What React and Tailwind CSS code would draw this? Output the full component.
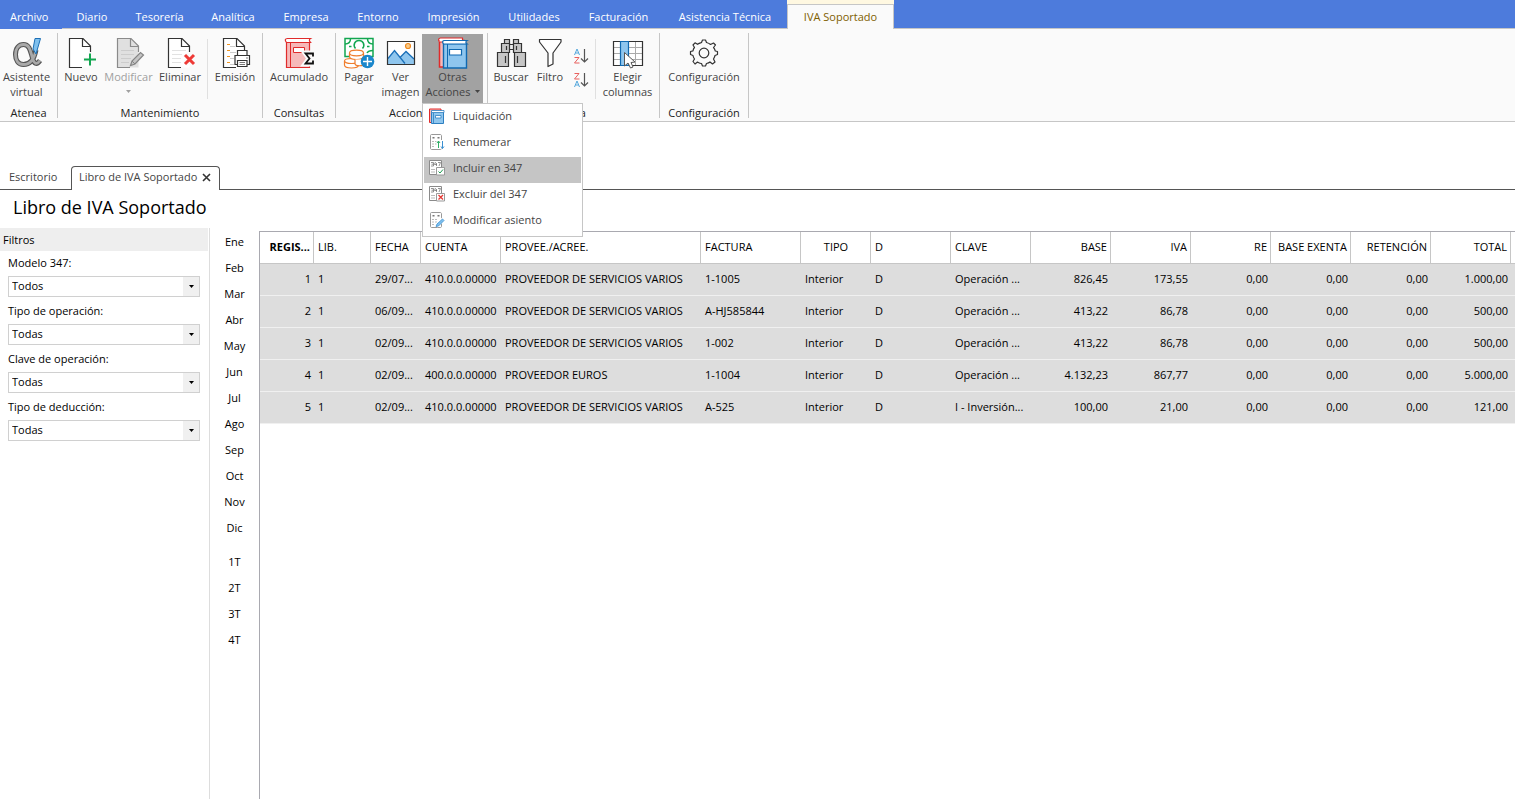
import React from 'react';

const menuTabs = [
  { label: 'Diario', width: 'w-[60px]' },
  { label: 'Tesorería', width: 'w-[75px]' },
  { label: 'Analítica', width: 'w-[72px]' },
  { label: 'Empresa', width: 'w-[74px]' },
  { label: 'Entorno', width: 'w-[70px]' },
  { label: 'Impresión', width: 'w-[81px]' },
  { label: 'Utilidades', width: 'w-[80px]' },
  { label: 'Facturación', width: 'w-[89px]' },
  { label: 'Asistencia Técnica', width: 'w-[124px]' },
];

const filters = [
  { id: 'modelo', label: 'Modelo 347:', value: 'Todos' },
  { id: 'tipo-operacion', label: 'Tipo de operación:', value: 'Todas' },
  { id: 'clave-operacion', label: 'Clave de operación:', value: 'Todas' },
  { id: 'tipo-deduccion', label: 'Tipo de deducción:', value: 'Todas' },
];

const months = ['Ene', 'Feb', 'Mar', 'Abr', 'May', 'Jun', 'Jul', 'Ago', 'Sep', 'Oct', 'Nov', 'Dic'];
const quarters = ['1T', '2T', '3T', '4T'];

const columns = [
  { label: 'REGIS...', width: 'w-[54px]', align: 'text-right', head: 'text-right font-bold' },
  { label: 'LIB.', width: 'w-[57px]', align: 'text-left', head: 'text-left font-normal' },
  { label: 'FECHA', width: 'w-[50px]', align: 'text-left', head: 'text-left font-normal' },
  { label: 'CUENTA', width: 'w-[80px]', align: 'text-left', head: 'text-left font-normal' },
  { label: 'PROVEE./ACREE.', width: 'w-[200px]', align: 'text-left', head: 'text-left font-normal' },
  { label: 'FACTURA', width: 'w-[100px]', align: 'text-left', head: 'text-left font-normal' },
  { label: 'TIPO', width: 'w-[70px]', align: 'text-left', head: 'text-center font-normal' },
  { label: 'D', width: 'w-[80px]', align: 'text-left', head: 'text-left font-normal' },
  { label: 'CLAVE', width: 'w-[80px]', align: 'text-left', head: 'text-left font-normal' },
  { label: 'BASE', width: 'w-[80px]', align: 'text-right', head: 'text-right font-normal' },
  { label: 'IVA', width: 'w-[80px]', align: 'text-right', head: 'text-right font-normal' },
  { label: 'RE', width: 'w-[80px]', align: 'text-right', head: 'text-right font-normal' },
  { label: 'BASE EXENTA', width: 'w-[80px]', align: 'text-right', head: 'text-right font-normal' },
  { label: 'RETENCIÓN', width: 'w-[80px]', align: 'text-right', head: 'text-right font-normal' },
  { label: 'TOTAL', width: 'w-[80px]', align: 'text-right', head: 'text-right font-normal' },
];

const rows = [
  ['1', '1', '29/07...', '410.0.0.00000', 'PROVEEDOR DE SERVICIOS VARIOS', '1-1005', 'Interior', 'D', 'Operación ...', '826,45', '173,55', '0,00', '0,00', '0,00', '1.000,00'],
  ['2', '1', '06/09...', '410.0.0.00000', 'PROVEEDOR DE SERVICIOS VARIOS', 'A-HJ585844', 'Interior', 'D', 'Operación ...', '413,22', '86,78', '0,00', '0,00', '0,00', '500,00'],
  ['3', '1', '02/09...', '410.0.0.00000', 'PROVEEDOR DE SERVICIOS VARIOS', '1-002', 'Interior', 'D', 'Operación ...', '413,22', '86,78', '0,00', '0,00', '0,00', '500,00'],
  ['4', '1', '02/09...', '400.0.0.00000', 'PROVEEDOR EUROS', '1-1004', 'Interior', 'D', 'Operación ...', '4.132,23', '867,77', '0,00', '0,00', '0,00', '5.000,00'],
  ['5', '1', '02/09...', '410.0.0.00000', 'PROVEEDOR DE SERVICIOS VARIOS', 'A-525', 'Interior', 'D', 'I - Inversión...', '100,00', '21,00', '0,00', '0,00', '0,00', '121,00'],
];

/* ---------- Ribbon icons ---------- */

const Icon = ({ children }) => (
  <svg width="36" height="33" viewBox="0 0 36 33" fill="none" aria-hidden="true" className="shrink-0">
    {children}
  </svg>
);

const alphaPath = 'M27 14 C25 24 20.500 28.500 14.500 28.500 C9 28.500 6.500 24 6.500 18.500 C6.500 12 10 8.500 14.500 8.500 C21 8.500 21.500 16 23.500 22 C25 27.500 27.500 29.500 31 24.500';

const AlphaIcon = () => (
  <Icon>
    <path d={alphaPath} stroke="#555" strokeWidth="5" />
    <path d={alphaPath} stroke="#a9a9a9" strokeWidth="2.800" />
    <path d="M26 2.500 h5.500 l-4.500 15.500 l-3 -5 z" fill="#7fc0ee" stroke="#1c6fb5" />
  </Icon>
);

const Page = ({ fill = '#fff', stroke = '#333' }) => (
  <>
    <path d="M6 2.500 H20 L27.500 10 V31.500 H6 Z" fill={fill} />
    <path d="M19 31.500 H6.500 V2.500 H20 L27.500 10 V16" stroke={stroke} strokeWidth="1.200" />
    <path d="M19.500 2.500 V10.500 H27.500" stroke={stroke} strokeWidth="1.200" />
  </>
);

const NewIcon = () => (
  <Icon>
    <Page />
    <path d="M27.500 16 V31.500 M20 23.500 H34" stroke="#fafafa" strokeWidth="4" />
    <path d="M27 17.500 V29.500 M21 23.500 H33" stroke="#12a650" strokeWidth="2" />
  </Icon>
);

const EditIcon = () => (
  <Icon>
    <Page fill="#e0e0e0" stroke="#8a8a8a" />
    <path d="M10 14.500 H23 M10 18.500 H23 M10 22.500 H20 M10 26.500 H18" stroke="#ccc" />
    <path d="M19.500 29.500 L21 25 L29.500 16.500 L32.500 19 L24 28 Z" fill="#c4c4c4" stroke="#858585" strokeWidth="1.200" />
    <path d="M21 25 L24 28" stroke="#858585" />
  </Icon>
);

const DeleteIcon = () => (
  <Icon>
    <Page />
    <path d="M10 14.500 H24 M10 18.500 H20 M10 22.500 H19 M10 26.500 H19" stroke="#e2e2e2" />
    <path d="M23 18.500 L32 28 M32 18.500 L23 28" stroke="#fafafa" strokeWidth="6" />
    <path d="M23 19 L32 28 M32 19 L23 28" stroke="#ee3a36" strokeWidth="3" />
  </Icon>
);

const PrintIcon = () => (
  <Icon>
    <Page />
    <path d="M10 8.500 h3 M10 14.500 h3 M10 20.500 h3 M10 26.500 h3" stroke="#f0941f" strokeWidth="1.200" />
    <path d="M13 10.500 h5 M13 16.500 h6 M13 22.500 h4 M13 28.500 h4" stroke="#ccc" />
    <path d="M18 19.500 H32.500 V28.500 H18 Z" fill="#fff" stroke="#333" strokeWidth="1.200" />
    <path d="M20.500 14.500 H30 V19.500 H20.500 Z" fill="#fff" stroke="#333" strokeWidth="1.200" />
    <path d="M20.500 24.500 H30 V30.500 H20.500 Z" fill="#fff" stroke="#333" strokeWidth="1.200" />
    <path d="M22.500 26.500 H28 M22.500 28.500 H28 M29 22 h2" stroke="#555" strokeWidth=".8" />
  </Icon>
);

const SummaryIcon = () => (
  <Icon>
    <path d="M5.500 6 H28.500 V31.500 H5.500 Z" fill="#f6b9b9" stroke="#e02b2b" strokeWidth="1.200" />
    <path d="M9.500 6.500 V31" stroke="#e02b2b" />
    <path d="M5.500 6.500 C3.500 4 4 2.500 6.500 2.500 H29.500 C28 3.500 28 5 29.500 6.500 Z" fill="#fff" stroke="#e02b2b" strokeWidth="1.200" />
    <path d="M12.500 11.500 h11 v5 h-11 z" fill="#fff" stroke="#e02b2b" />
    <path d="M32 20 V17 H24 L28 22.500 L24 28 H32 V25" stroke="#fafafa" strokeWidth="5" />
    <path d="M32 20.500 V17.500 H24.500 L28.500 22.500 L24.500 27.500 H32 V24.500" stroke="#111" strokeWidth="1.800" />
  </Icon>
);

const PayIcon = () => (
  <Icon>
    <path d="M4 2.500 H32 V20.500 H4 Z" fill="#fff" stroke="#12a650" strokeWidth="1.500" />
    <path d="M4 8 C7.500 8 9.500 6 9.500 2.500 M32 8 C28.500 8 26.500 6 26.500 2.500 M14.500 12.500 C11.500 9 14 4.500 18 4.500 C22 4.500 24.500 9 21.500 12.500 M26 17 C27 15 29 14.500 32 14.500" stroke="#12a650" strokeWidth="1.500" />
    <path d="M8 10.500 h2.500 M26 10.500 h2.500" stroke="#12a650" strokeWidth="1.500" />
    <g fill="#fff" stroke="#ef7d2d" strokeWidth="1.200">
      <path d="M3.500 25 v4 c0 4 14 4 14 0 v-4" />
      <ellipse cx="10.500" cy="25" rx="7" ry="2.500" />
      <path d="M8.500 17 v3.500 c0 4 14 4 14 0 V17" />
      <ellipse cx="15.500" cy="17" rx="7" ry="2.800" />
      <path d="M14 23.500 v4 c0 3 9 3 9 0 v-4" />
    </g>
    <circle cx="26.500" cy="25.500" r="6.800" fill="#1b87cb" />
    <path d="M26.500 21 v9 M22 25.500 h9" stroke="#fff" strokeWidth="1.400" />
  </Icon>
);

const ImageIcon = () => (
  <Icon>
    <path d="M4.500 5.500 H31.500 V28.500 H4.500 Z" fill="#fff" />
    <path d="M5 22.500 L11.500 14.500 L17.500 21 L23.500 15.500 L31 22.500 V28 H5 Z" fill="#8fc6ee" />
    <path d="M5 22.500 L11.500 14.500 L22 27.500 M17.500 21 L23 15.500 L31 23" stroke="#1a6fb8" strokeWidth="1.300" />
    <circle cx="25" cy="10" r="2.500" fill="#f9cc8b" stroke="#ef8a1f" strokeWidth="1.200" />
    <path d="M4.500 5.500 H31.500 V28.500 H4.500 Z" stroke="#333" strokeWidth="1.200" />
  </Icon>
);

const Books = () => (
  <>
    <path d="M4.500 4.500 H29 V31 H4.500 Z" fill="#f6b9b9" stroke="#e02b2b" strokeWidth="1.500" />
    <path d="M4.500 5.500 C3 4 3.500 2 5.500 2 H27.500 V6 H5" fill="#fff" stroke="#e02b2b" strokeWidth="1.200" />
    <path d="M8.500 7.500 H31.500 V32 H8.500 Z" fill="#8fc6ee" stroke="#1069b1" strokeWidth="1.400" />
    <path d="M12.500 8 V32" stroke="#1069b1" />
    <path d="M8.500 8 C7 6 7.500 4.500 9.500 4.500 H32 C30.500 5.500 30.500 7 32 8 Z" fill="#fff" stroke="#1069b1" strokeWidth="1.200" />
    <path d="M14.500 13.500 h12 v5.500 h-12 z" fill="#fff" stroke="#1069b1" strokeWidth="1.200" />
  </>
);

const BooksIcon = () => <Icon><Books /></Icon>;

const BinocularsIcon = () => (
  <Icon>
    <g fill="#c6c6c6" stroke="#333" strokeWidth="1.200">
      <path d="M11.500 3.500 h5 v4 h-5 z M20.500 3.500 h5 v4 h-5 z" />
      <path d="M16 8.500 h5 v5 h-5 z" fill="#eee" />
      <path d="M8.500 7.500 h8 v9 h-8 z M20.500 7.500 h8 v9 h-8 z" />
      <path d="M4.500 16.500 h11 v14 h-11 z M21.500 16.500 h11 v14 h-11 z" />
      <path d="M13.500 10 v4 M23.500 10 v4 M12.500 20 v7 M24.500 20 v7" />
    </g>
  </Icon>
);

const FilterIcon = () => (
  <Icon>
    <path d="M7.500 3.500 H29 V6 L21 17 V28 L16 30.500 V17 L7.500 6 Z" fill="#fff" stroke="#333" strokeWidth="1.200" strokeLinejoin="round" />
  </Icon>
);

const ColumnsIcon = () => (
  <Icon>
    <path d="M3.500 5.500 H32.500 V29.500 H3.500 Z" fill="#fff" />
    <path d="M3.500 11.500 H32.500 M3.500 17.500 H32.500 M3.500 23.500 H32.500 M25.500 5.500 V29.500" stroke="#aaa" />
    <path d="M3.500 5.500 H32.500 V29.500 H3.500 Z" stroke="#333" strokeWidth="1.200" />
    <path d="M10.500 5.500 H18.500 V29.500 H10.500 Z" fill="#8fc6ee" stroke="#1069b1" strokeWidth="1.200" />
    <path d="M14.500 16.500 V30 L18 27 L20.500 32 L23 31 L21 26.500 L25 26 Z" fill="#fff" stroke="#555" />
  </Icon>
);

const GearIcon = () => (
  <Icon>
    <circle cx="18" cy="17" r="4.800" stroke="#333" strokeWidth="1.200" />
    <path
      d="M15.500 6.500 L16.500 4 H19.500 L20.500 6.500 C22.500 7 23.500 7.500 24.500 8.500 L27.500 7 L29.500 9 L27.500 11.500 C28.500 12.500 29 14 29.300 15 L31.500 15.500 V18.500 L29 19.500 C28.500 21.500 28 22 27.500 23 L29 26 L26.500 28 L24 26 C23 27 22 27.300 20.500 27.500 L19.500 30 H16.500 L15.500 27.500 C13.500 27.300 13 26.800 11.500 26 L9 28 L7 25.500 L8.500 23 C7.500 21.500 7.200 20.500 7 19.500 L4.500 18.500 V15.500 L7 14.800 C7.200 13.500 7.500 12.500 8.500 11.500 L7 9 L9 6.800 L11.500 8.300 C13 7.300 14 7 15.500 6.500 Z"
      stroke="#333"
      strokeWidth="1.200"
      strokeLinejoin="round"
    />
  </Icon>
);

const SortIcon = ({ down }) => (
  <svg width="16" height="16" viewBox="0 0 16 16" fill="none" aria-hidden="true">
    <path d={down ? 'M1.500 7 L4 1 L6.500 7 M2.500 5 H5.500' : 'M1.500 15 L4 9 L6.500 15 M2.500 13 H5.500'} stroke="#53a7dc" />
    <path d={down ? 'M1.500 9.500 H6 L1.500 15 H6.500' : 'M1.500 1.500 H6 L1.500 7 H6.500'} stroke="#e8605e" />
    <path d="M11.500 1 V14 M8 10.500 L11.500 14 L15 10.500" stroke="#555" strokeWidth="1.200" />
  </svg>
);

/* ---------- Drop-down menu icons ---------- */

const SmallIcon = ({ children }) => (
  <svg width="16" height="16" viewBox="0 0 16 16" fill="none" aria-hidden="true" className="shrink-0">
    {children}
  </svg>
);

const SmallBooks = () => (
  <SmallIcon>
    <path d="M.5 1 H12 V14.500 H.5 Z" fill="#f6b9b9" stroke="#e02b2b" />
    <path d="M2.500 3.500 H14.500 V15.500 H2.500 Z" fill="#8fc6ee" stroke="#2d7fc1" />
    <path d="M2.500 2.500 H15 V4.500 H2.500 Z" fill="#fff" stroke="#2d7fc1" strokeWidth=".8" />
    <path d="M4.500 5 V15" stroke="#2d7fc1" strokeWidth=".8" />
    <path d="M6.500 7.500 h5.500 v2.500 h-5.500 z" fill="#fff" stroke="#2d7fc1" strokeWidth=".8" />
  </SmallIcon>
);

const ListSheet = () => (
  <>
    <path d="M1.500 1.500 C1.500 .8 2 .5 2.500 .5 H11 C12 .5 12.500 1 12.500 1.500 V14.500 C12.500 15 12 15.500 11.500 15.500 H2.500 C2 15.500 1.500 15 1.500 14.500 Z" fill="#fff" stroke="#999" />
    <path d="M3.500 3 h2 v1.500 h-2 z M8.500 3 h2 v1.500 h-2 z" fill="#777" />
    <path d="M3 7.500 h2 M6 7.500 h2 M3 10 h2 M6 10 h2 M3 12.500 h2" stroke="#bbb" />
  </>
);

const RenumberIcon = () => (
  <SmallIcon>
    <ListSheet />
    <path d="M7.500 6 h8.500 v8.500 h-8.500 z" fill="#fff" />
    <path d="M9.500 14 V7 M8 9 L9.500 7 L11 9" stroke="#2fae66" />
    <path d="M13.500 7 V14.500 M12 12.500 L13.500 14.500 L15 12.500" stroke="#3a8fd0" />
  </SmallIcon>
);

const ModifyEntryIcon = () => (
  <SmallIcon>
    <ListSheet />
    <path d="M7 14 L14.500 7" stroke="#fff" strokeWidth="4" />
    <path d="M7 14.500 L8 12 L13.500 7 L15 8.500 L9.500 14 Z" fill="#7fc0ee" stroke="#3a8fd0" strokeWidth=".8" />
  </SmallIcon>
);

const Sheet347 = () => (
  <>
    <path d="M.5 .5 H12.500 V14.500 H.5 Z" fill="#fff" stroke="#8a8a8a" />
    <path d="M2 2.500 h2.500 v3.500 h-2.500 M2.500 4.200 h2 M6.500 2 l-1 2.500 h2.500 M7.500 3 v3 M9 2.500 h2.500 l-1.500 3.500" stroke="#777" strokeWidth=".8" />
    <path d="M2 9.500 h4 M2 12 h4" stroke="#bbb" />
  </>
);

const IncludeIcon = () => (
  <SmallIcon>
    <Sheet347 />
    <path d="M7.500 7.500 h8 v7.500 h-8 z" fill="#fff" stroke="#999" />
    <path d="M9.500 11.500 L11 13 L14 9.500" stroke="#1c9c50" />
  </SmallIcon>
);

const ExcludeIcon = () => (
  <SmallIcon>
    <Sheet347 />
    <path d="M7.500 7.500 h8 v7.500 h-8 z" fill="#fff" stroke="#999" />
    <path d="M9.500 9 L14 13.500 M14 9 L9.500 13.500" stroke="#e53935" strokeWidth="1.300" />
  </SmallIcon>
);

const actions = [
  { label: 'Liquidación', icon: SmallBooks },
  { label: 'Renumerar', icon: RenumberIcon },
  { label: 'Incluir en 347', icon: IncludeIcon, active: true },
  { label: 'Excluir del 347', icon: ExcludeIcon },
  { label: 'Modificar asiento', icon: ModifyEntryIcon },
];

/* ---------- Building blocks ---------- */

const Caret = ({ className }) => (
  <svg width="5" height="3" viewBox="0 0 5 3" aria-hidden="true" className={className}>
    <path d="M0 0 H5 L2.500 3 Z" fill="currentColor" />
  </svg>
);

const RibbonButton = ({ icon: IconComponent, width, disabled, className = '', children, ...rest }) => (
  <button
    type="button"
    disabled={disabled}
    className={`flex h-[69px] flex-col items-center pt-[2px] leading-[15px] whitespace-nowrap ${disabled ? 'text-[#a0a0a0]' : 'text-[#444]'} ${width} ${className}`}
    {...rest}
  >
    <IconComponent />
    {children}
  </button>
);

const Group = ({ label, width, children }) => (
  <section className={`flex shrink-0 ${width}`}>
    <div className="flex flex-1 flex-col">
      <div className="flex justify-center pt-px">{children}</div>
      <h2 className="text-center leading-[19px] text-[#222]">{label}</h2>
    </div>
    <div className="h-[85px] w-px bg-[#c6c6c6]"></div>
  </section>
);

const Divider = () => <div className="mt-[5px] h-[60px] w-px bg-[#e0e0e0]"></div>;

const MenuBar = () => (
  <nav className="flex h-7 items-stretch bg-[#4d7bdc] text-white">
    <a href="#archivo" className="relative -mb-px flex w-[62px] items-center bg-[#4d7bdc] pt-[5px] pl-[10px]">Archivo</a>
    {menuTabs.map((tab) => (
      <a key={tab.label} href="#menu" className={`flex shrink-0 items-center justify-center pt-[6px] whitespace-nowrap ${tab.width}`}>
        {tab.label}
      </a>
    ))}
    <div className="relative -mb-px w-[107px] bg-[#fff8e1] pt-1">
      <a href="#iva" className="flex h-full items-center justify-center border border-b-0 border-[#c6c6c6] bg-[#fafafa] text-[#7f6000]">
        IVA Soportado
      </a>
    </div>
  </nav>
);

const Ribbon = () => (
  <div className="flex h-[94px] border-y border-[#c6c6c6] bg-[#fafafa] pt-1">
    <Group label="Atenea" width="w-[58px]">
      <RibbonButton icon={AlphaIcon} width="w-[57px]" className="pr-1">
        <span>Asistente</span>
        <span>virtual</span>
      </RibbonButton>
    </Group>
    <Group label="Mantenimiento" width="w-[205px]">
      <RibbonButton icon={NewIcon} width="w-[46px]">Nuevo</RibbonButton>
      <RibbonButton icon={EditIcon} width="w-[49px]" disabled>
        <span>Modificar</span>
        <Caret className="mt-[6px]" />
      </RibbonButton>
      <RibbonButton icon={DeleteIcon} width="w-[54px]">Eliminar</RibbonButton>
      <Divider />
      <RibbonButton icon={PrintIcon} width="w-[54px]">Emisión</RibbonButton>
    </Group>
    <Group label="Consultas" width="w-[73px]">
      <RibbonButton icon={SummaryIcon} width="w-[72px]">Acumulado</RibbonButton>
    </Group>
    <Group label="Acciones" width="w-[152px]">
      <RibbonButton icon={PayIcon} width="w-[40px]">Pagar</RibbonButton>
      <RibbonButton icon={ImageIcon} width="w-[43px]">
        <span>Ver</span>
        <span>imagen</span>
      </RibbonButton>
      <div className="relative mr-px">
        <RibbonButton icon={BooksIcon} width="w-[61px]" className="bg-[#a2a2a2]" aria-haspopup="menu" aria-expanded="true">
          <span>Otras</span>
          <span className="flex items-center gap-1">
            Acciones
            <Caret />
          </span>
        </RibbonButton>
        <ul role="menu" className="absolute top-full left-0 z-20 w-[161px] border border-[#c6c6c6] bg-white p-px">
          {actions.map(({ label, icon: ActionIcon, active }) => (
            <li key={label} role="none">
              <button
                type="button"
                role="menuitem"
                className={`flex h-[26px] w-full items-center gap-2 pb-1 pl-[5px] whitespace-nowrap text-[#444] ${active ? 'bg-[#c5c5c5]' : ''}`}
              >
                <ActionIcon />
                {label}
              </button>
            </li>
          ))}
        </ul>
      </div>
    </Group>
    <Group label="Vista" width="w-[172px]">
      <RibbonButton icon={BinocularsIcon} width="w-[46px]">Buscar</RibbonButton>
      <RibbonButton icon={FilterIcon} width="w-[32px]">Filtro</RibbonButton>
      <div className="flex w-[29px] flex-col items-center gap-2 pt-[14px]">
        <button type="button" aria-label="Orden ascendente"><SortIcon down /></button>
        <button type="button" aria-label="Orden descendente"><SortIcon /></button>
      </div>
      <Divider />
      <RibbonButton icon={ColumnsIcon} width="w-[63px]">
        <span>Elegir</span>
        <span>columnas</span>
      </RibbonButton>
    </Group>
    <Group label="Configuración" width="w-[89px]">
      <RibbonButton icon={GearIcon} width="w-[88px]">Configuración</RibbonButton>
    </Group>
  </div>
);

const DocumentTabs = () => (
  <div className="mt-11 flex h-6 text-[#444]">
    <a href="#escritorio" className="flex w-[71px] items-center border-b border-[#555] pl-[9px]">Escritorio</a>
    <div className="flex w-[149px] items-center justify-between rounded-t-[4px] border border-b-0 border-[#555] pr-[8px] pb-[2px] pl-[7px] whitespace-nowrap">
      <span>Libro de IVA Soportado</span>
      <button type="button" aria-label="Cerrar">
        <svg width="9" height="9" viewBox="0 0 9 9" fill="none">
          <path d="M1 1 L8 8 M8 1 L1 8" stroke="#333" strokeWidth="1.600" />
        </svg>
      </button>
    </div>
    <div className="flex-1 border-b border-[#555]"></div>
  </div>
);

const FilterPanel = () => (
  <aside className="w-[210px] shrink-0 border-r border-[#ddd]">
    <h2 className="mr-px h-[23px] bg-[#eee] pl-[3px] leading-[23px]">Filtros</h2>
    <form className="pr-[9px] pl-2">
      {filters.map((filter) => (
        <div key={filter.id} className="h-12">
          <label htmlFor={filter.id} className="block h-[25px] leading-[24px]">{filter.label}</label>
          <div className="relative">
            <select id={filter.id} className="block h-[21px] w-full appearance-none border border-[#d0d0d0] bg-white pl-[3px]">
              <option>{filter.value}</option>
            </select>
            <span className="pointer-events-none absolute inset-y-px right-px flex w-4 items-center justify-center bg-[#f0f0f0]">
              <Caret />
            </span>
          </div>
        </div>
      ))}
    </form>
  </aside>
);

const PeriodButton = ({ label }) => (
  <button type="button" className="h-[26px] w-full text-center">{label}</button>
);

const PeriodList = () => (
  <div className="flex w-[49px] shrink-0 flex-col pt-px">
    {months.map((month) => <PeriodButton key={month} label={month} />)}
    <div className="h-2"></div>
    {quarters.map((quarter) => <PeriodButton key={quarter} label={quarter} />)}
  </div>
);

const RecordsTable = () => (
  <div className="mt-[3px] min-w-0 flex-1 overflow-hidden border-t border-l border-[#a9a9b0]">
    <table className="w-full min-w-[1251px] table-fixed border-separate border-spacing-0 whitespace-nowrap">
      <colgroup>
        {columns.map((column) => <col key={column.label} className={column.width} />)}
        <col />
      </colgroup>
      <thead>
        <tr className="h-8">
          {columns.map((column) => (
            <th key={column.label} scope="col" className={`border-r border-b border-[#c6c6c6] pr-[3px] pl-1 ${column.head}`}>
              {column.label}
            </th>
          ))}
          <td className="border-b border-[#c6c6c6]"></td>
        </tr>
      </thead>
      <tbody>
        {rows.map((row) => (
          <tr key={row[0]} className="h-8 bg-[#ddd]">
            {row.map((cell, i) => (
              <td key={columns[i].label} className={`border-b border-[#f0f0f0] pr-[3px] pl-1 ${columns[i].align}`}>{cell}</td>
            ))}
            <td className="border-b border-[#f0f0f0]"></td>
          </tr>
        ))}
      </tbody>
    </table>
  </div>
);

const App = () => {
  return (
    <div className="flex min-h-screen flex-col bg-white font-['Open_Sans','Noto_Sans',sans-serif] text-[11px] text-black">
      <MenuBar />
      <Ribbon />
      <DocumentTabs />
      <h1 className="h-[38px] pl-[13px] text-[18px] leading-[34px]">Libro de IVA Soportado</h1>
      <main className="flex flex-1">
        <FilterPanel />
        <PeriodList />
        <RecordsTable />
      </main>
    </div>
  );
};

export default App;
